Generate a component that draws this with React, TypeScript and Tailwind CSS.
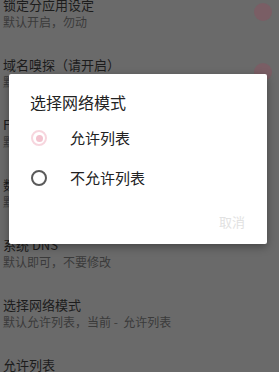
import { useState } from 'react'

const items = [
  { title: '锁定分应用设定', sub: '默认开启，勿动', toggle: true },
  { title: '域名嗅探（请开启）', sub: '默认开启', toggle: true },
  { title: 'FakeDNS', sub: '默认关闭' },
  { title: '数据包嗅探', sub: '默认开启' },
  { title: '系统 DNS', sub: '默认即可，不要修改' },
  { title: '选择网络模式', sub: '默认允许列表，当前 -  允许列表' },
  { title: '允许列表', sub: '' },
]

const Radio = ({ checked }: { checked: boolean }) =>
  checked ? (
    <span className="flex h-4 w-4 items-center justify-center rounded-full border-2 border-[#f7d6de]">
      <span className="h-[7px] w-[7px] rounded-full bg-[#f3c3cf]" />
    </span>
  ) : (
    <span className="h-4 w-4 rounded-full border-2 border-[#5a5a5a]" />
  )

const App = () => {
  const [mode, setMode] = useState('allow')

  return (
    <div
      className="relative h-[372px] w-[279px] overflow-hidden bg-[#6a6a6a]"
      style={{ fontFamily: '"Noto Sans CJK SC", "Noto Sans", sans-serif' }}
    >
      <div className="mt-[-4px]">
        {items.map((item) => (
          <div key={item.title} className="relative h-[60px] px-[3px]">
            <div className="text-[13px] leading-[18px] text-[#1c1c1c]">{item.title}</div>
            <div className="whitespace-pre text-[12px] leading-[16px] text-[#3a3a3a]">{item.sub}</div>
            {item.toggle && (
              <span className="absolute right-[7px] top-[7px] h-[18px] w-[18px] rounded-full bg-[#7a5e65]" />
            )}
          </div>
        ))}
      </div>

      <div className="absolute left-[9px] top-[74px] flex h-[170px] w-[258px] flex-col rounded-[2px] bg-white pt-[18px] pb-[12px] shadow-[0_3px_8px_rgba(0,0,0,0.35)]">
        <div className="pl-[21px] text-[16px] leading-[20px] text-[#222]">选择网络模式</div>
        <div className="mt-[6px]">
          <button
            className="flex h-[40px] w-full items-center pl-[22px] text-left"
            onClick={() => setMode('allow')}
          >
            <Radio checked={mode === 'allow'} />
            <span className="ml-[23px] text-[15px] leading-[20px] text-[#222]">允许列表</span>
          </button>
          <button
            className="flex h-[40px] w-full items-center pl-[22px] text-left"
            onClick={() => setMode('deny')}
          >
            <Radio checked={mode === 'deny'} />
            <span className="ml-[23px] text-[15px] leading-[20px] text-[#222]">不允许列表</span>
          </button>
        </div>
        <div className="mt-[14px] flex justify-end pr-[22px]">
          <button className="text-[13px] leading-[20px] text-[#e2e2e2]">取消</button>
        </div>
      </div>
    </div>
  )
}

export default App
